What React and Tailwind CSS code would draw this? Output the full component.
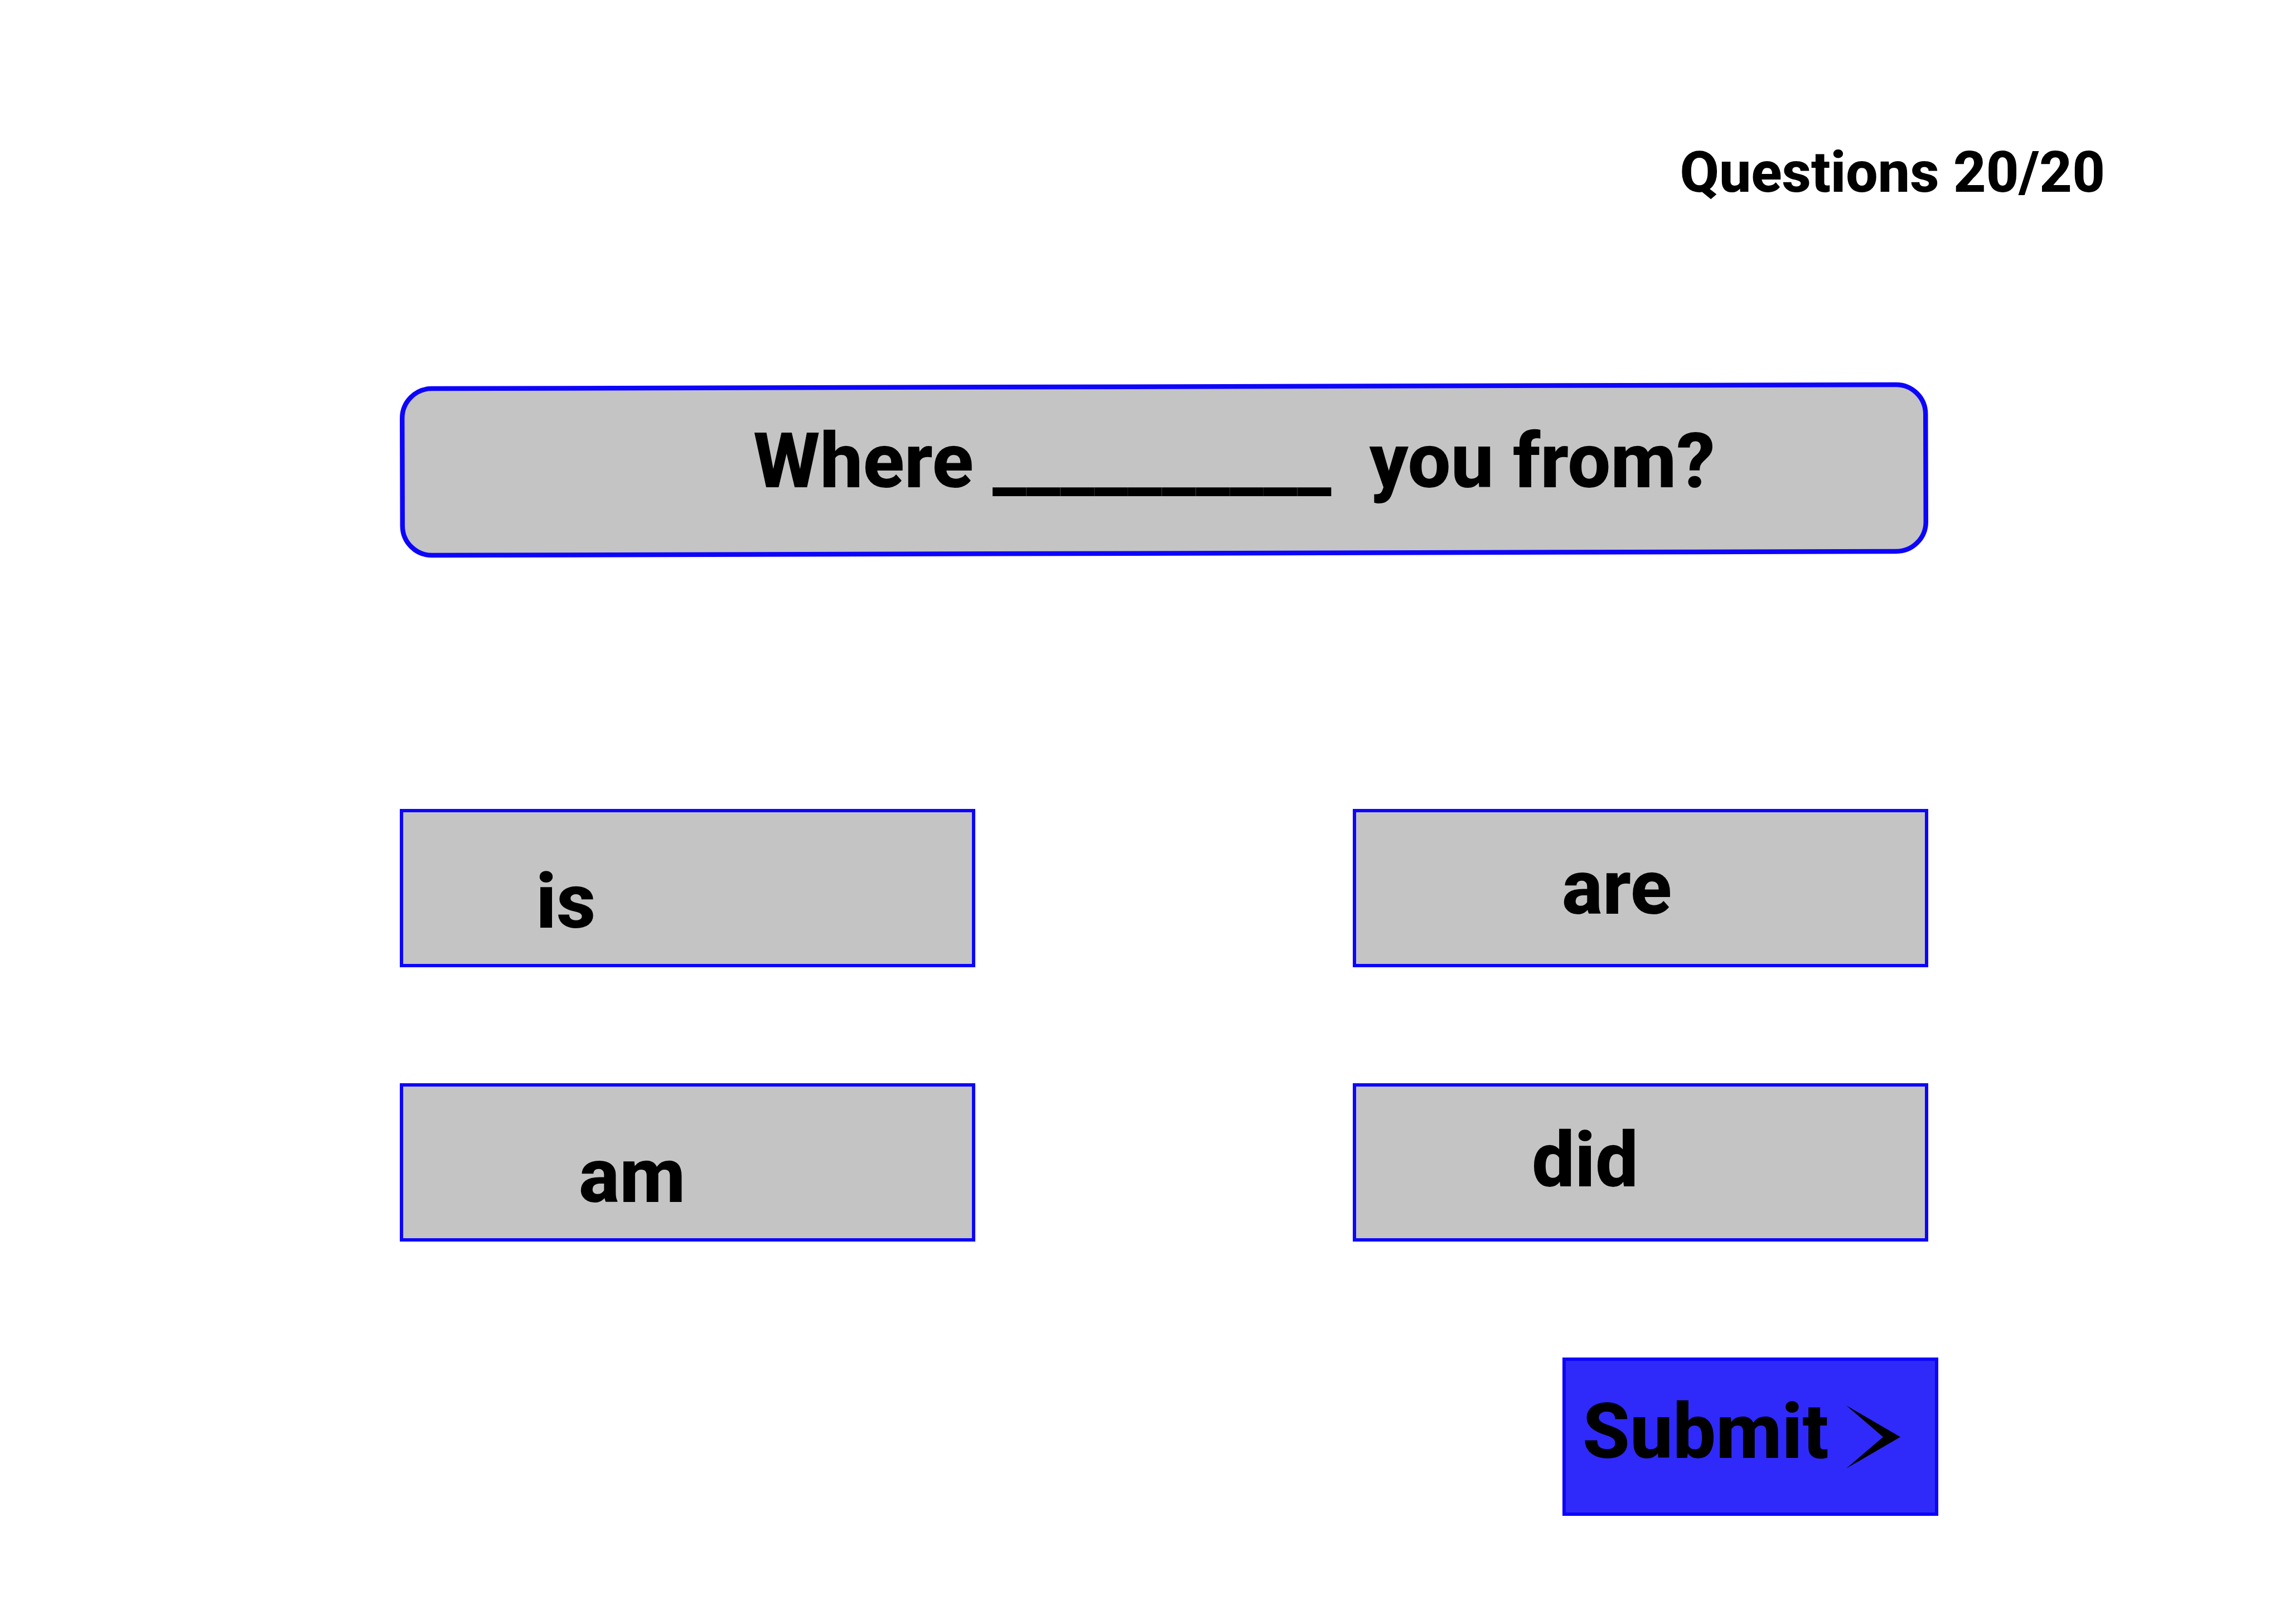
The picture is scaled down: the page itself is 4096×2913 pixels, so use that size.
const answers = [
  { text: 'is', pad: 'pl-[238px] pt-[80px]' },
  { text: 'are', pad: 'pl-[369px] pt-[55px]' },
  { text: 'am', pad: 'pl-[315px] pt-[80px]' },
  { text: 'did', pad: 'pl-[315px] pt-[52px]' },
];

export default function App() {
  return (
    <main className="min-h-screen bg-white font-['Roboto',sans-serif] font-extrabold text-black">
      <header className="flex justify-end pt-[249px] pr-[321px]">
        <p className="text-[102px] leading-[120px]">Questions 20/20</p>
      </header>
      <div className="pl-[717px] pr-[638px]">
        <section className="relative mt-[319px] h-[312px]">
          <svg className="absolute inset-0 h-full w-full overflow-visible" viewBox="0 0 2741 312" preserveAspectRatio="none" aria-hidden="true">
            <rect x="4.5" y="5.5" width="2732" height="299" rx="53" transform="rotate(-0.155 1370.5 155)" fill="#c4c4c4" stroke="#0d05fa" strokeWidth="8.5" />
          </svg>
          <h1 className="relative pt-[59px] pl-[634px] text-[137px] leading-[160px] whitespace-pre">Where __________  you from?</h1>
        </section>
        <div className="mt-[451px] grid grid-cols-[1032px_1032px] justify-between gap-y-[208px]">
          {answers.map((a) => (
            <button key={a.text} type="button" className={`flex h-[284px] items-start border-[6px] border-[#0d05fa] bg-[#c4c4c4] text-left text-[137px] leading-[160px] ${a.pad}`}>
              {a.text}
            </button>
          ))}
        </div>
        <div className="mt-[208px] flex justify-end">
          <button type="button" className="-mr-[18px] flex h-[284px] w-[674px] items-center border-[6px] border-[#0d05fa] bg-[#2f2af9] pl-[30px] text-[137px] leading-[160px]">
            <span className="pb-[18px]">Submit</span>
            <svg className="ml-[32px] h-[113px] w-[97px]" viewBox="0 0 97 113" aria-hidden="true">
              <path d="M0 0 L97 56.5 L0 113 L66 56.5 Z" />
            </svg>
          </button>
        </div>
      </div>
    </main>
  );
}
